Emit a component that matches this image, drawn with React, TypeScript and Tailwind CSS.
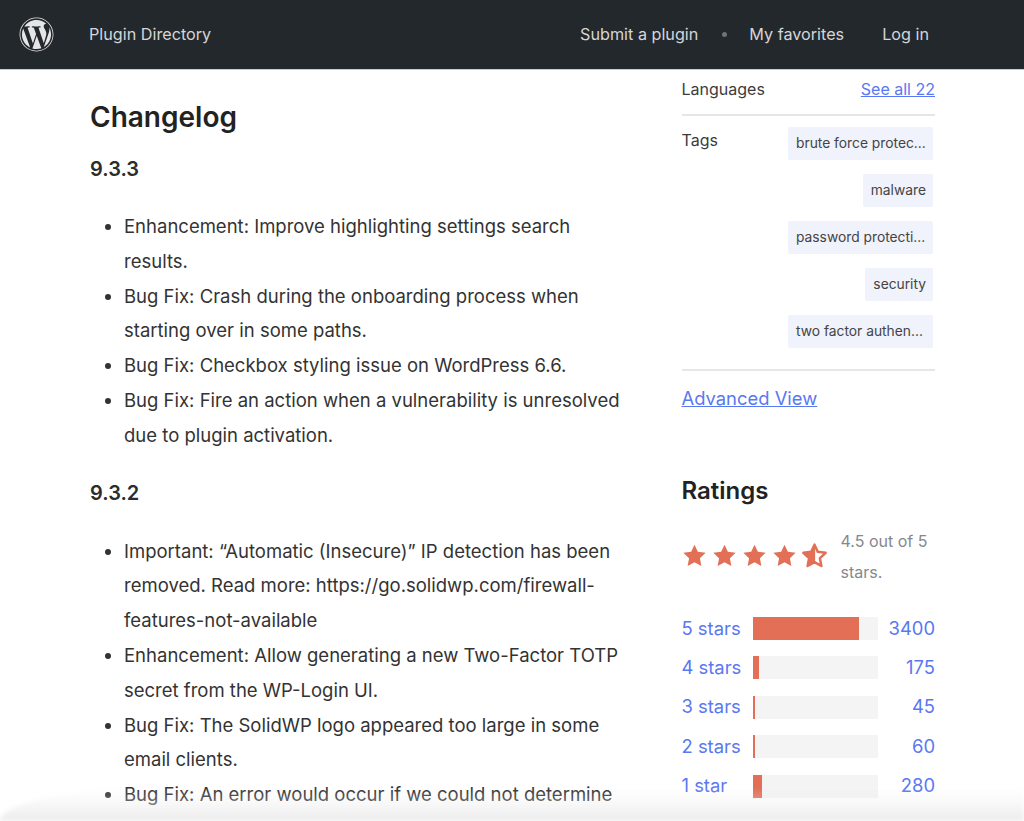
import { FaWordpress } from "react-icons/fa";

const releases = [
  {
    version: "9.3.3",
    notes: [
      "Enhancement: Improve highlighting settings search results.",
      "Bug Fix: Crash during the onboarding process when starting over in some paths.",
      "Bug Fix: Checkbox styling issue on WordPress 6.6.",
      "Bug Fix: Fire an action when a vulnerability is unresolved due to plugin activation.",
    ],
  },
  {
    version: "9.3.2",
    notes: [
      "Important: “Automatic (Insecure)” IP detection has been removed. Read more: https://go.solidwp.com/firewall-features-not-available",
      "Enhancement: Allow generating a new Two-Factor TOTP secret from the WP-Login UI.",
      "Bug Fix: The SolidWP logo appeared too large in some email clients.",
      "Bug Fix: An error would occur if we could not determine",
    ],
  },
];

const tags = ["brute force protec...", "malware", "password protecti...", "security", "two factor authen..."];

const ratings = [
  { label: "5 stars", count: 3400, width: 85 },
  { label: "4 stars", count: 175, width: 5 },
  { label: "3 stars", count: 45, width: 1.6 },
  { label: "2 stars", count: 60, width: 1.6 },
  { label: "1 star", count: 280, width: 7.5 },
];

const STAR = "M12 1.6l3.2 6.9 7.5.9-5.5 5.2 1.4 7.5L12 18.4l-6.6 3.7 1.4-7.5L1.300 9.400l7.500-.9z";

function Star({ half }: { half?: boolean }) {
  if (half) {
    return (
      <svg viewBox="0 0 24 24" className="h-[25px] w-[25px]">
        <path d={STAR} fill="none" stroke="#e26f56" strokeWidth="2.4" strokeLinejoin="round" />
        <path d="M12.600 1.600v16.800l-7.200 3.700 1.400-7.500L1.300 9.400l7.500-.9z" fill="#e26f56" />
      </svg>
    );
  }
  return (
    <svg viewBox="0 0 24 24" className="h-[25px] w-[25px]">
      <path d={STAR} fill="#e26f56" />
    </svg>
  );
}

export default function App() {
  return (
    <div className="relative h-[821px] w-[1024px] overflow-hidden bg-white font-['Inter',sans-serif] text-[#2c2c2c]">
      <header className="flex h-[70px] items-center border-b border-[#c9cbcc] bg-[#23282d] pl-[19px] pr-[95px] text-[16.2px] text-[#d5d6d7]">
        <FaWordpress className="h-[35px] w-[35px] text-[#e4e5e6]" />
        <span className="ml-[35px]">Plugin Directory</span>
        <nav className="ml-auto flex items-center">
          <span>Submit a plugin</span>
          <span className="ml-[24px] h-[5px] w-[5px] rounded-full bg-[#6f7376]" />
          <span className="ml-[22px]">My favorites</span>
          <span className="ml-[38px]">Log in</span>
        </nav>
      </header>

      <div className="flex pl-[90px]">
        <main className="w-[540px] shrink-0 pt-[28px]">
          <h2 className="text-[28px] font-semibold leading-[38px] text-[#222]">Changelog</h2>
          {releases.map((release, i) => (
            <section key={release.version} className={i === 0 ? "mt-[16px]" : "mt-[23px]"}>
              <h4 className="text-[20px] font-semibold leading-[34px] text-[#2c2c2c]">{release.version}</h4>
              <ul
                className={`list-disc pl-[34px] text-[18.5px] leading-[34.8px] text-[#333] ${
                  i === 0 ? "mt-[23px]" : "mt-[24px]"
                }`}
              >
                {release.notes.map((note) => (
                  <li key={note}>{note}</li>
                ))}
              </ul>
            </section>
          ))}
        </main>

        <aside className="ml-[51.5px] w-[253.5px] shrink-0 text-[16px] text-[#3c3c3c]">
          <div className="flex h-[46px] items-start justify-between border-b-2 border-[#e6e6e6] pt-[7px]">
            <span>Languages</span>
            <a className="text-[#5a78f2] underline">See all 22</a>
          </div>

          <div className="flex justify-between border-b-2 border-[#e6e6e6] pb-[21px] pt-[11px]">
            <span className="pt-[1px]">Tags</span>
            <div className="mr-[2px] flex flex-col items-end gap-[14px]">
              {tags.map((tag) => (
                <span
                  key={tag}
                  className={`whitespace-nowrap rounded-[2px] bg-[#f0f2fc] py-[8px] pl-[8px] pr-[7px] text-[13.8px] leading-[17px] text-[#444] ${
                    tag.endsWith("...") ? "w-[145px]" : ""
                  }`}
                >
                  {tag}
                </span>
              ))}
            </div>
          </div>

          <a className="mt-[14px] block text-[18.4px] leading-[26px] text-[#5a78f2] underline">Advanced View</a>

          <h3 className="mt-[64px] text-[24px] font-semibold leading-[32px] text-[#222]">Ratings</h3>

          <div className="mt-[19px] flex items-center">
            <div className="mb-[3px] flex gap-[5px]">
              <Star />
              <Star />
              <Star />
              <Star />
              <Star half />
            </div>
            <p className="ml-[14px] text-[16px] leading-[31px] text-[#85888c]">4.5 out of 5 stars.</p>
          </div>

          <div className="mt-[29px] flex flex-col gap-[16.4px]">
            {ratings.map((row) => (
              <div key={row.label} className="flex h-[23px] items-center text-[18.4px] text-[#5a78f2]">
                <a className="w-[71px]">{row.label}</a>
                <div className="h-[23px] w-[125px] bg-[#f4f4f4]">
                  <div className="h-full bg-[#e26f56]" style={{ width: `${row.width}%` }} />
                </div>
                <a className="ml-auto">{row.count}</a>
              </div>
            ))}
          </div>
        </aside>
      </div>

      {/* soft fade along the bottom edge */}
      <div className="pointer-events-none absolute inset-x-0 bottom-0 h-[34px] rounded-tl-[170px_34px] bg-gradient-to-b from-transparent via-[#ececec]/25 via-40% to-[#ececec] blur-[2px]" />
    </div>
  );
}
